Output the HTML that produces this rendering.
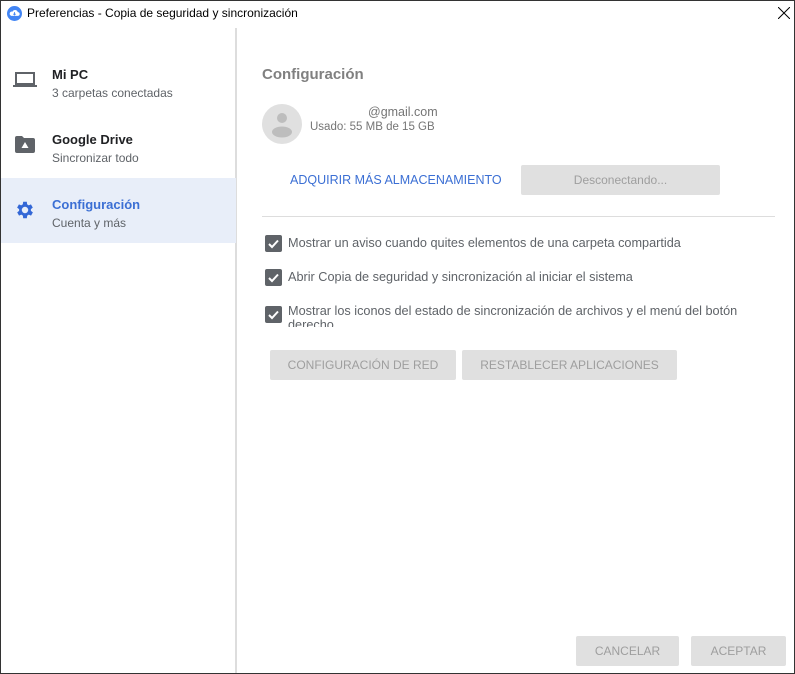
<!DOCTYPE html>
<html><head><meta charset="utf-8"><style>
*{margin:0;padding:0;box-sizing:border-box}
body{width:795px;height:674px;overflow:hidden;background:#fff;font-family:"Liberation Sans",Arial,sans-serif;position:relative}
.win{position:absolute;left:0;top:0;width:795px;height:674px;border:1px solid #333;}
.abs{position:absolute}
.title{left:27px;top:6px;font-size:12px;color:#000}
.side{left:1px;top:28px;width:236px;height:645px;border-right:2px solid #ddd}
.item .t{font-size:13px;font-weight:bold;color:#202124}
.item .s{font-size:12px;color:#5f6368;margin-top:4px}
.btn{position:absolute;background:#e0e0e0;color:#9e9e9e;font-size:12px;text-align:center;border-radius:2px}
.cb{position:absolute;left:265px;width:17px;height:17px;background:#5f6368;border-radius:2px}
.lbl{position:absolute;left:288px;font-size:12.7px;color:#5f6368}
</style></head><body>
<div class="win"></div>
<svg class="abs" style="left:7px;top:6px" width="15" height="15" viewBox="0 0 16 16"><circle cx="8" cy="8" r="8" fill="#4285f4"/><path d="M4.5 10.5h7a2 2 0 0 0 0-4 3 3 0 0 0-5.6-.5 2.2 2.2 0 0 0-1.4 4.5z" fill="#fff"/><path d="M8 6.5v3M6.8 8.3 8 9.5l1.2-1.2" stroke="#4285f4" stroke-width="1" fill="none"/></svg>
<div class="abs title">Preferencias - Copia de seguridad y sincronización</div>
<svg class="abs" style="left:778px;top:7px" width="12" height="12"><path d="M0 0L12 12M12 0L0 12" stroke="#000" stroke-width="1"/></svg>
<div class="abs side"></div>
<div class="abs" style="left:1px;top:178px;width:235px;height:65px;background:#e8eef9"></div>
<svg class="abs" style="left:13px;top:72px" width="24" height="16" viewBox="0 0 24 16"><rect x="3" y="1" width="18" height="11" fill="none" stroke="#5f6368" stroke-width="2"/><rect x="0" y="13" width="24" height="2" fill="#5f6368"/></svg>
<div class="abs item" style="left:52px;top:67px"><div class="t">Mi PC</div><div class="s">3 carpetas conectadas</div></div>
<svg class="abs" style="left:15px;top:136px" width="20" height="17" viewBox="0 0 20 17"><path d="M0 2a2 2 0 0 1 2-2h5l2 2h9a2 2 0 0 1 2 2v11a2 2 0 0 1-2 2H2a2 2 0 0 1-2-2z" fill="#5f6368"/><path d="M10 6l3.5 6h-7z" fill="#fff"/></svg>
<div class="abs item" style="left:52px;top:132px"><div class="t">Google Drive</div><div class="s">Sincronizar todo</div></div>
<svg class="abs" style="left:14px;top:199px" width="22" height="22" viewBox="0 0 24 24"><path fill="#3367d6" d="M19.4 13a7.5 7.5 0 0 0 0-2l2.1-1.6-2-3.5-2.5 1a7 7 0 0 0-1.7-1L15 3h-4l-.4 2.9a7 7 0 0 0-1.7 1l-2.5-1-2 3.5L6.6 11a7.5 7.5 0 0 0 0 2l-2.1 1.6 2 3.5 2.5-1a7 7 0 0 0 1.7 1L11 21h4l.4-2.9a7 7 0 0 0 1.7-1l2.5 1 2-3.5zM13 15.5a3.5 3.5 0 1 1 0-7 3.5 3.5 0 0 1 0 7z" transform="translate(-1 0)"/></svg>
<div class="abs item" style="left:52px;top:197px"><div class="t" style="color:#3b6fd4">Configuración</div><div class="s">Cuenta y más</div></div>
<div class="abs" style="left:262px;top:66px;font-size:15px;font-weight:bold;color:#808080">Configuración</div>
<svg class="abs" style="left:262px;top:104px" width="40" height="40"><circle cx="20" cy="20" r="20" fill="#e0e0e0"/><circle cx="20" cy="14" r="5" fill="#bdbdbd"/><ellipse cx="20" cy="28" rx="10" ry="5.5" fill="#bdbdbd"/></svg>
<div class="abs" style="left:368px;top:105px;font-size:12.5px;color:#757575">@gmail.com</div>
<div class="abs" style="left:310px;top:121px;font-size:11.5px;color:#757575">Usado: 55 MB de 15 GB</div>
<div class="abs" style="left:290px;top:173px;font-size:12.5px;color:#3b6fd4">ADQUIRIR MÁS ALMACENAMIENTO</div>
<div class="btn" style="left:521px;top:165px;width:199px;height:30px;line-height:30px">Desconectando...</div>
<div class="abs" style="left:262px;top:216px;width:513px;height:1px;background:#ddd"></div>
<svg width="0" height="0" style="position:absolute"><defs><path id="ck" d="M4 9l3 3 6-6.5" stroke="#fff" stroke-width="2" fill="none"/></defs></svg>
<div class="cb" style="top:235px"><svg width="17" height="17"><use href="#ck"/></svg></div>
<div class="lbl" style="top:236px">Mostrar un aviso cuando quites elementos de una carpeta compartida</div>
<div class="cb" style="top:269px"><svg width="17" height="17"><use href="#ck"/></svg></div>
<div class="lbl" style="top:270px">Abrir Copia de seguridad y sincronización al iniciar el sistema</div>
<div class="cb" style="top:306px"><svg width="17" height="17"><use href="#ck"/></svg></div>
<div class="lbl" style="top:304px;width:470px;height:23px;overflow:hidden;line-height:14px">Mostrar los iconos del estado de sincronización de archivos y el menú del botón derecho</div>
<div class="btn" style="left:270px;top:350px;width:186px;height:30px;line-height:30px">CONFIGURACIÓN DE RED</div>
<div class="btn" style="left:462px;top:350px;width:215px;height:30px;line-height:30px">RESTABLECER APLICACIONES</div>
<div class="btn" style="left:576px;top:636px;width:103px;height:30px;line-height:30px">CANCELAR</div>
<div class="btn" style="left:691px;top:636px;width:95px;height:30px;line-height:30px">ACEPTAR</div>
</body></html>
